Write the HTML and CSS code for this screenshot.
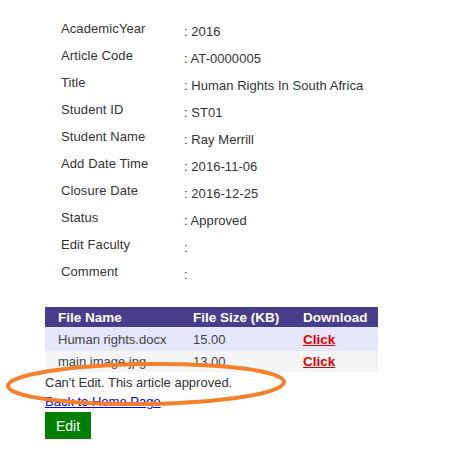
FILE: index.html
```
<!DOCTYPE html>
<html>
<head>
<meta charset="utf-8">
<link rel="stylesheet" href="styles.css">
</head>
<body>
<div class="page">
  <div class="details">
    <div class="row"><span class="label">AcademicYear</span><span class="value">: 2016</span></div>
    <div class="row"><span class="label">Article Code</span><span class="value">: AT-0000005</span></div>
    <div class="row"><span class="label">Title</span><span class="value">: Human Rights In South Africa</span></div>
    <div class="row"><span class="label">Student ID</span><span class="value">: ST01</span></div>
    <div class="row"><span class="label">Student Name</span><span class="value">: Ray Merrill</span></div>
    <div class="row"><span class="label">Add Date Time</span><span class="value">: 2016-11-06</span></div>
    <div class="row"><span class="label">Closure Date</span><span class="value">: 2016-12-25</span></div>
    <div class="row"><span class="label">Status</span><span class="value">: Approved</span></div>
    <div class="row"><span class="label">Edit Faculty</span><span class="value">:</span></div>
    <div class="row"><span class="label">Comment</span><span class="value">:</span></div>
  </div>
  <table class="files">
    <thead>
      <tr><th class="c1">File Name</th><th class="c2">File Size (KB)</th><th class="c3">Download</th></tr>
    </thead>
    <tbody>
      <tr class="odd"><td class="c1">Human rights.docx</td><td class="c2">15.00</td><td class="c3"><a class="dl" href="#">Click</a></td></tr>
      <tr class="even"><td class="c1">main image.jpg</td><td class="c2">13.00</td><td class="c3"><a class="dl" href="#">Click</a></td></tr>
    </tbody>
  </table>
  <div class="notice">
    <p class="msg">Can't Edit. This article approved.</p>
    <svg class="ring" width="290" height="52" viewBox="0 0 290 52">
      <ellipse cx="146" cy="26" rx="138" ry="20" fill="none" stroke="#f5802a" stroke-width="4" transform="rotate(-0.8 146 26)"/>
    </svg>
  </div>
  <a class="back" href="#">Back to Home Page</a>
  <button class="edit">Edit</button>
</div>
</body>
</html>
```
FILE: styles.css
```
html, body {
  margin: 0;
  padding: 0;
  background: #fff;
}
body {
  font-family: "Liberation Sans", Arial, sans-serif;
  font-size: 13px;
  color: #333;
}
.page {
  padding: 20px 0 0 45px;
  position: relative;
}
.details {
  display: flex;
  flex-direction: column;
  padding-left: 16px;
  margin-bottom: 17px;
}
.row {
  display: flex;
  height: 27px;
}
.label {
  width: 123px;
  padding-top: 1px;
  letter-spacing: 0.1px;
}
.value {
  padding-top: 4px;
  letter-spacing: 0.05px;
}
.files {
  border-collapse: collapse;
  width: 333px;
  font-size: 13px;
}
.files th {
  background: #483d8b;
  color: #fff;
  font-weight: bold;
  text-align: left;
  height: 20px;
  padding: 0;
  font-size: 13.5px;
}
.files td {
  padding: 0;
  color: #444;
}
.files .odd td { background: #e6e6fa; height: 24px; }
.files .even td { background: #f5f5f5; height: 21px; }
.c1 { padding-left: 13px !important; width: 135px; }
.c2 { width: 110px; }
.dl {
  color: #e00000;
  font-weight: bold;
  font-size: 13.5px;
}
.notice {
  position: relative;
}
.msg {
  margin: 0;
  height: 22px;
  line-height: 22px;
  color: #333;
}
.ring {
  position: absolute;
  left: -45px;
  top: -14px;
  pointer-events: none;
}
.back {
  display: block;
  color: #0000ee;
  line-height: 16px;
  height: 17px;
}
.edit {
  display: block;
  margin-top: 1px;
  background: #008000;
  color: #fff;
  border: none;
  width: 46px;
  height: 27px;
  font-family: "Liberation Sans", Arial, sans-serif;
  font-size: 14px;
  padding: 0;
}
```
